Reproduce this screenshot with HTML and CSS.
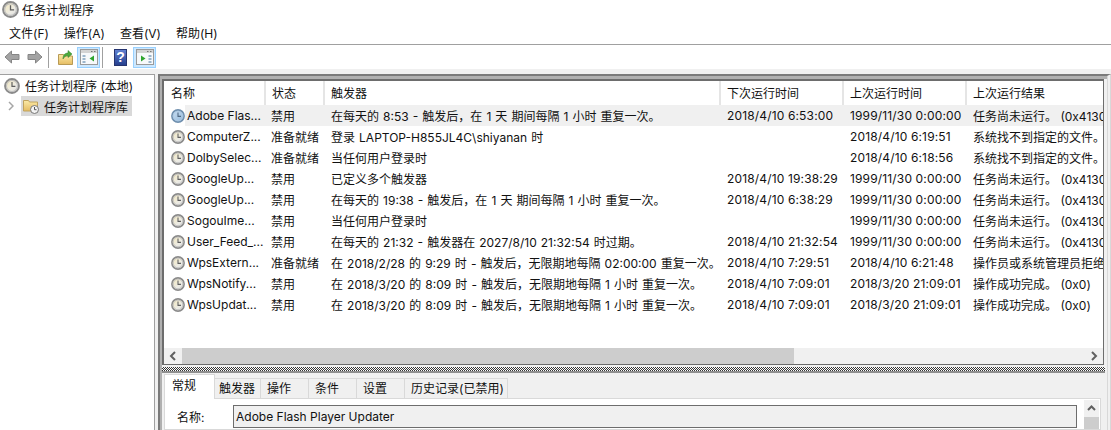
FILE: index.html
```html
<!DOCTYPE html>
<html lang="zh-CN">
<head>
  <meta charset="UTF-8">
  <title>任务计划程序</title>
  <link rel="stylesheet" href="styles.css">
</head>
<body>
  <svg class="defs" width="0" height="0">
    <defs>
      <linearGradient id="faceGrey" x1="0" y1="0" x2="1" y2="1">
        <stop offset="0" stop-color="#f6e9b8"/><stop offset=".6" stop-color="#ecebe4"/><stop offset="1" stop-color="#dcdcdc"/>
      </linearGradient>
      <linearGradient id="faceBlue" x1="0" y1="0" x2="1" y2="1">
        <stop offset="0" stop-color="#cfe2f3"/><stop offset="1" stop-color="#8fb6da"/>
      </linearGradient>
      <linearGradient id="folderFill" x1="0" y1="0" x2="0" y2="1">
        <stop offset="0" stop-color="#fbeaa8"/><stop offset="1" stop-color="#e5bc62"/>
      </linearGradient>
      <symbol id="clock" viewBox="0 0 16 16">
        <circle cx="8" cy="8" r="7" fill="url(#faceGrey)" stroke="#8a8a8a" stroke-width="1.800"/>
        <circle cx="8" cy="8" r="5.500" fill="none" stroke="#bdbdbd"/>
        <path d="M8 4v4.400h3.400" fill="none" stroke="#5f5f5f" stroke-width="1.200"/>
      </symbol>
      <symbol id="clockBlue" viewBox="0 0 16 16">
        <circle cx="8" cy="8" r="7" fill="url(#faceBlue)" stroke="#6f8fae" stroke-width="1.800"/>
        <circle cx="8" cy="8" r="5.500" fill="none" stroke="#a9c6e0"/>
        <path d="M8 4v4.400h3.400" fill="none" stroke="#4f6780" stroke-width="1.200"/>
      </symbol>
      <symbol id="arrowLeft" viewBox="0 0 16 14">
        <path d="M7.500 1 1 7l6.500 6V9.500H15v-5H7.500z" fill="#a3a3a3" stroke="#858585"/>
      </symbol>
      <symbol id="arrowRight" viewBox="0 0 16 14">
        <path d="M8.500 1 15 7l-6.500 6V9.500H1v-5h7.500z" fill="#a3a3a3" stroke="#858585"/>
      </symbol>
      <symbol id="paneIcon" viewBox="0 0 18 16">
        <rect x=".5" y=".5" width="17" height="15" fill="#f7f9fb" stroke="#9a9a9a"/>
        <rect x="1" y="1" width="16" height="3" fill="#d4d4d4"/>
        <path d="M11 2.500h1.500M14 2.500h1.500" stroke="#777"/>
      </symbol>
    </defs>
  </svg>

  <div class="titlebar">
    <svg class="icon-title"><use href="#clock"/></svg>
    <span>任务计划程序</span>
  </div>

  <div class="menubar">
    <span>文件(F)</span>
    <span>操作(A)</span>
    <span>查看(V)</span>
    <span>帮助(H)</span>
  </div>

  <div class="toolbar">
    <svg class="tool-arrow"><use href="#arrowLeft"/></svg>
    <svg class="tool-arrow next"><use href="#arrowRight"/></svg>
    <i class="tool-sep first"></i>
    <svg class="tool-folder" viewBox="0 0 15 16">
      <path d="M.5 5.500h5l1 1.500h8v8.500H.5z" fill="url(#folderFill)" stroke="#b89a55"/>
      <path d="M5 10c0-4 2-6 5-6V1.500L14 5l-4 3.500V6.500C8 6.500 6 8 5 10z" fill="#4cab3c" stroke="#2f7d2a" stroke-width=".5"/>
    </svg>
    <div class="tool-btn">
      <svg class="pane-svg">
        <use href="#paneIcon"/>
        <path d="M2.500 6h3v2h-3zM2.500 9h3v2h-3zM2.500 12h3v2h-3z" fill="#9cb6cc"/>
        <path d="M14 6.500v6L9.500 9.500z" fill="#2fa52f"/>
      </svg>
    </div>
    <i class="tool-sep"></i>
    <div class="tool-help">?</div>
    <div class="tool-btn">
      <svg class="pane-svg">
        <use href="#paneIcon"/>
        <path d="M12.500 6h3v2h-3zM12.500 9h3v2h-3zM12.500 12h3v2h-3z" fill="#9cb6cc"/>
        <path d="M5 6.500v6l4.500-3z" fill="#2fa52f"/>
      </svg>
    </div>
  </div>

  <div class="workspace">
    <div class="tree">
      <div class="tree-root">
        <svg class="icon16"><use href="#clock"/></svg>
        <span>任务计划程序 (本地)</span>
      </div>
      <div class="tree-child">
        <svg class="chevron" viewBox="0 0 6 10"><path d="M1 1l4 4-4 4" fill="none" stroke="#a6a6a6" stroke-width="1.500"/></svg>
        <div class="tree-selected">
          <svg class="tree-folder" viewBox="0 0 16 16">
            <path d="M.5 2.500h5l1 1.500h8v9H.5z" fill="url(#folderFill)" stroke="#c0a35e"/>
            <circle cx="11.500" cy="11.500" r="4" fill="#f4f4f4" stroke="#777"/>
            <path d="M11.500 9v2.700h2" fill="none" stroke="#555"/>
          </svg>
          <span>任务计划程序库</span>
        </div>
      </div>
    </div>

    <div class="main">
      <div class="list">
        <div class="list-scroll">
          <table class="tasks">
            <colgroup>
              <col class="col-name">
              <col class="col-state">
              <col class="col-trigger">
              <col class="col-time">
              <col class="col-time">
              <col class="col-result">
            </colgroup>
            <thead>
              <tr>
                <th>名称</th><th>状态</th><th>触发器</th><th>下次运行时间</th><th>上次运行时间</th><th>上次运行结果</th>
              </tr>
            </thead>
            <tbody>
              <tr class="current">
                <td><div class="name"><svg class="icon14"><use href="#clockBlue"/></svg><span class="name-text">Adobe Flas...</span></div></td>
                <td>禁用</td><td>在每天的 8:53 - 触发后，在 1 天 期间每隔 1 小时 重复一次。</td><td>2018/4/10 6:53:00</td><td>1999/11/30 0:00:00</td><td>任务尚未运行。 (0x41303)</td>
              </tr>
              <tr>
                <td><div class="name"><svg class="icon14"><use href="#clock"/></svg><span class="name-text">ComputerZ...</span></div></td>
                <td>准备就绪</td><td>登录 LAPTOP-H855JL4C\shiyanan 时</td><td></td><td>2018/4/10 6:19:51</td><td>系统找不到指定的文件。 (0x2)</td>
              </tr>
              <tr>
                <td><div class="name"><svg class="icon14"><use href="#clock"/></svg><span class="name-text">DolbySelec...</span></div></td>
                <td>准备就绪</td><td>当任何用户登录时</td><td></td><td>2018/4/10 6:18:56</td><td>系统找不到指定的文件。 (0x2)</td>
              </tr>
              <tr>
                <td><div class="name"><svg class="icon14"><use href="#clock"/></svg><span class="name-text">GoogleUp...</span></div></td>
                <td>禁用</td><td>已定义多个触发器</td><td>2018/4/10 19:38:29</td><td>1999/11/30 0:00:00</td><td>任务尚未运行。 (0x41303)</td>
              </tr>
              <tr>
                <td><div class="name"><svg class="icon14"><use href="#clock"/></svg><span class="name-text">GoogleUp...</span></div></td>
                <td>禁用</td><td>在每天的 19:38 - 触发后，在 1 天 期间每隔 1 小时 重复一次。</td><td>2018/4/10 6:38:29</td><td>1999/11/30 0:00:00</td><td>任务尚未运行。 (0x41303)</td>
              </tr>
              <tr>
                <td><div class="name"><svg class="icon14"><use href="#clock"/></svg><span class="name-text">SogouIme...</span></div></td>
                <td>禁用</td><td>当任何用户登录时</td><td></td><td>1999/11/30 0:00:00</td><td>任务尚未运行。 (0x41303)</td>
              </tr>
              <tr>
                <td><div class="name"><svg class="icon14"><use href="#clock"/></svg><span class="name-text">User_Feed_...</span></div></td>
                <td>禁用</td><td>在每天的 21:32 - 触发器在 2027/8/10 21:32:54 时过期。</td><td>2018/4/10 21:32:54</td><td>1999/11/30 0:00:00</td><td>任务尚未运行。 (0x41303)</td>
              </tr>
              <tr>
                <td><div class="name"><svg class="icon14"><use href="#clock"/></svg><span class="name-text">WpsExtern...</span></div></td>
                <td>准备就绪</td><td>在 2018/2/28 的 9:29 时 - 触发后，无限期地每隔 02:00:00 重复一次。</td><td>2018/4/10 7:29:51</td><td>2018/4/10 6:21:48</td><td>操作员或系统管理员拒绝了请求。</td>
              </tr>
              <tr>
                <td><div class="name"><svg class="icon14"><use href="#clock"/></svg><span class="name-text">WpsNotify...</span></div></td>
                <td>禁用</td><td>在 2018/3/20 的 8:09 时 - 触发后，无限期地每隔 1 小时 重复一次。</td><td>2018/4/10 7:09:01</td><td>2018/3/20 21:09:01</td><td>操作成功完成。 (0x0)</td>
              </tr>
              <tr>
                <td><div class="name"><svg class="icon14"><use href="#clock"/></svg><span class="name-text">WpsUpdat...</span></div></td>
                <td>禁用</td><td>在 2018/3/20 的 8:09 时 - 触发后，无限期地每隔 1 小时 重复一次。</td><td>2018/4/10 7:09:01</td><td>2018/3/20 21:09:01</td><td>操作成功完成。 (0x0)</td>
              </tr>
            </tbody>
          </table>
        </div>
        <div class="hscroll">
          <svg class="hscroll-arrow" viewBox="0 0 18 16"><path d="M11 4 7 8l4 4" fill="none" stroke="#606060" stroke-width="2"/></svg>
          <div class="hscroll-track"><div class="hscroll-thumb"></div></div>
          <svg class="hscroll-arrow" viewBox="0 0 18 16"><path d="M7 4l4 4-4 4" fill="none" stroke="#606060" stroke-width="2"/></svg>
        </div>
      </div>

      <div class="splitter"></div>

      <div class="detail">
        <div class="tabs">
          <div class="tab active">常规</div>
          <div class="tab t-trigger">触发器</div>
          <div class="tab">操作</div>
          <div class="tab">条件</div>
          <div class="tab">设置</div>
          <div class="tab t-history">历史记录(已禁用)</div>
        </div>
        <div class="tab-body">
          <div class="form">
            <label class="form-label">名称:</label>
            <div class="form-value">Adobe Flash Player Updater</div>
          </div>
          <div class="vscroll">
            <svg class="vscroll-arrow" viewBox="0 0 15 17"><path d="M4 10l3.500-3.500L11 10" fill="none" stroke="#606060" stroke-width="2"/></svg>
            <div class="vscroll-thumb"></div>
          </div>
        </div>
      </div>
    </div>
  </div>
</body>
</html>
```

FILE: styles.css
```css
* {
  box-sizing: border-box;
}
html, body {
  height: 100%;
}
body {
  margin: 0;
  overflow: hidden;
  background-color: #fff;
  color: #111;
  font-family: Inter, "Noto Sans CJK SC", sans-serif;
  font-size: 12px;
  display: flex;
  flex-direction: column;
}
.defs {
  position: absolute;
}
.icon-title {
  width: 17px;
  height: 17px;
  flex: none;
}
.icon16 {
  width: 16px;
  height: 16px;
  flex: none;
}
.icon14 {
  width: 14px;
  height: 14px;
  flex: none;
}

.titlebar {
  height: 21px;
  display: flex;
  align-items: center;
  gap: 3px;
  padding: 0 0 2px 2px;
  flex: none;
}
.menubar {
  height: 23px;
  flex: none;
  display: flex;
  align-items: center;
  gap: 15px;
  padding: 0 0 1px 9px;
}
.toolbar {
  height: 25px;
  flex: none;
  border-top: 1px solid #a0a0a0;
  display: flex;
  align-items: center;
  padding-left: 4px;
}
.tool-arrow {
  width: 16px;
  height: 14px;
}
.tool-arrow.next {
  margin-left: 7px;
}
.tool-sep {
  width: 1px;
  height: 21px;
  background-color: #a0a0a0;
  margin: 0 2px;
}
.tool-sep.first {
  margin: 0 9px 0 5px;
}
.tool-folder {
  width: 15px;
  height: 16px;
  margin-right: 4px;
}
.tool-btn {
  width: 23px;
  height: 21px;
  background-color: #cce8ff;
  border: 1px solid #99d1ff;
  display: flex;
  align-items: center;
  justify-content: center;
}
.pane-svg {
  width: 18px;
  height: 16px;
}
.tool-help {
  width: 13px;
  height: 17px;
  margin: 0 6px 0 9px;
  background: linear-gradient(#5f7fd0, #26408f);
  border: 1px solid #26346f;
  color: #fff;
  font-family: "Liberation Sans", sans-serif;
  font-weight: bold;
  font-size: 14px;
  line-height: 15px;
  text-align: center;
}

.workspace {
  flex: 1;
  min-height: 0;
  display: flex;
  background-color: #f0f0f0;
  padding-top: 5px;
}
.tree {
  width: 155px;
  flex: none;
  background-color: #fff;
  border-top: 1px solid #a0a0a0;
  border-right: 1px solid #a0a0a0;
  padding-top: 1px;
}
.tree-root {
  height: 19px;
  display: flex;
  align-items: center;
  gap: 5px;
  padding-left: 4px;
}
.tree-child {
  display: flex;
  align-items: center;
  margin-top: 1px;
  padding-left: 8px;
}
.chevron {
  width: 6px;
  height: 10px;
  margin-right: 7px;
}
.tree-selected {
  width: 111px;
  height: 20px;
  background-color: #d9d9d9;
  display: flex;
  align-items: center;
  gap: 5px;
  padding-left: 2px;
}
.tree-folder {
  width: 16px;
  height: 16px;
}

.main {
  flex: 1;
  min-width: 0;
  margin-left: 3px;
  display: flex;
  flex-direction: column;
  padding: 3px 0 0 2px;
  border-top: 2px solid #7a7a7a;
  border-left: 2px solid #7a7a7a;
  border-right: 4px double #d8d8d8;
  box-shadow: inset 2px 3px #b0b0b0;
}
.list {
  height: 286px;
  flex: none;
  margin-right: 3px;
  border: 1px solid #6d6d6d;
  border-width: 2px 1px 1px 2px;
  background-color: #fff;
  display: flex;
  flex-direction: column;
}
.list-scroll {
  flex: 1;
  min-height: 0;
  overflow: hidden;
}
.tasks {
  width: 1040px;
  table-layout: fixed;
  border-collapse: collapse;
}
.col-name {
  width: 101px;
}
.col-state {
  width: 59px;
}
.col-trigger {
  width: 396px;
}
.col-time {
  width: 123px;
}
.col-result {
  width: 238px;
}
.tasks th {
  height: 24px;
  padding: 0 6px 2px;
  font-weight: normal;
  text-align: left;
  white-space: nowrap;
  overflow: hidden;
  border-right: 2px solid #e5e5e5;
}
.tasks td {
  height: 21px;
  padding: 0 6px;
  white-space: nowrap;
  overflow: hidden;
}
.tasks th:first-child {
  padding-left: 7px;
}
.tasks td:first-child {
  padding: 0 0 0 7px;
}
.tasks td:nth-child(n+3) {
  padding-left: 7px;
}
.tasks td:nth-child(3) {
  word-spacing: .7px;
}
.tasks td:nth-child(4),
.tasks td:nth-child(5) {
  letter-spacing: .15px;
}
.name {
  display: flex;
  align-items: center;
  height: 21px;
}
.name-text {
  flex: 1;
  padding-left: 2px;
  line-height: 21px;
}
.current td {
  background-color: #f0f0f0;
}
.current td:first-child {
  background-color: transparent;
}
.current .name-text {
  background-color: #f0f0f0;
}

.hscroll {
  height: 16px;
  flex: none;
  display: flex;
  background-color: #f0f0f0;
}
.hscroll-arrow {
  width: 18px;
  height: 16px;
  flex: none;
}
.hscroll-track {
  flex: 1;
}
.hscroll-thumb {
  width: 612px;
  height: 16px;
  background-color: #cdcdcd;
}

.splitter {
  height: 8px;
  flex: none;
  margin-right: 2px;
  border-top: 2px solid #f0f0f0;
  border-bottom: 2px solid #8f8f8f;
  background: repeating-conic-gradient(#333 0 25%, #fff 0 50%) 0 0 / 2px 2px;
}

.detail {
  flex: 1;
  min-height: 0;
  padding: 1px 5px 0 2px;
  background-color: #f0f0f0;
  display: flex;
  flex-direction: column;
}
.tabs {
  display: flex;
  align-items: flex-end;
  height: 24px;
  flex: none;
}
.tab {
  width: 48px;
  height: 20px;
  padding-left: 6px;
  line-height: 19px;
  border: 1px solid #d9d9d9;
  border-bottom: none;
  border-left: none;
}
.tab.active {
  width: 51px;
  height: 25px;
  margin-bottom: -1px;
  padding-left: 7px;
  line-height: 21px;
  background-color: #fff;
  border-left: 1px solid #d9d9d9;
  position: relative;
  z-index: 1;
}
.t-trigger {
  width: 46px;
  padding-left: 4px;
  white-space: nowrap;
}
.t-history {
  width: 103px;
  white-space: nowrap;
}
.tab-body {
  flex: 1;
  min-height: 0;
  background-color: #fff;
  border: 1px solid #d9d9d9;
  display: flex;
  justify-content: space-between;
  margin-right: 1px;
}
.form {
  flex: 1;
  display: flex;
  align-items: flex-start;
  padding: 6px 7px 0 12px;
}
.form-label {
  width: 56px;
  flex: none;
  line-height: 25px;
}
.form-value {
  flex: 1;
  height: 23px;
  line-height: 21px;
  padding-left: 2px;
  background-color: #f0f0f0;
  border: 1px solid #6d6d6d;
}
.vscroll {
  width: 15px;
  flex: none;
  margin: 1px 1px 0 0;
  background-color: #f0f0f0;
  display: flex;
  flex-direction: column;
}
.vscroll-arrow {
  width: 15px;
  height: 17px;
  flex: none;
}
.vscroll-thumb {
  flex: 1;
  background-color: #cdcdcd;
}
```
